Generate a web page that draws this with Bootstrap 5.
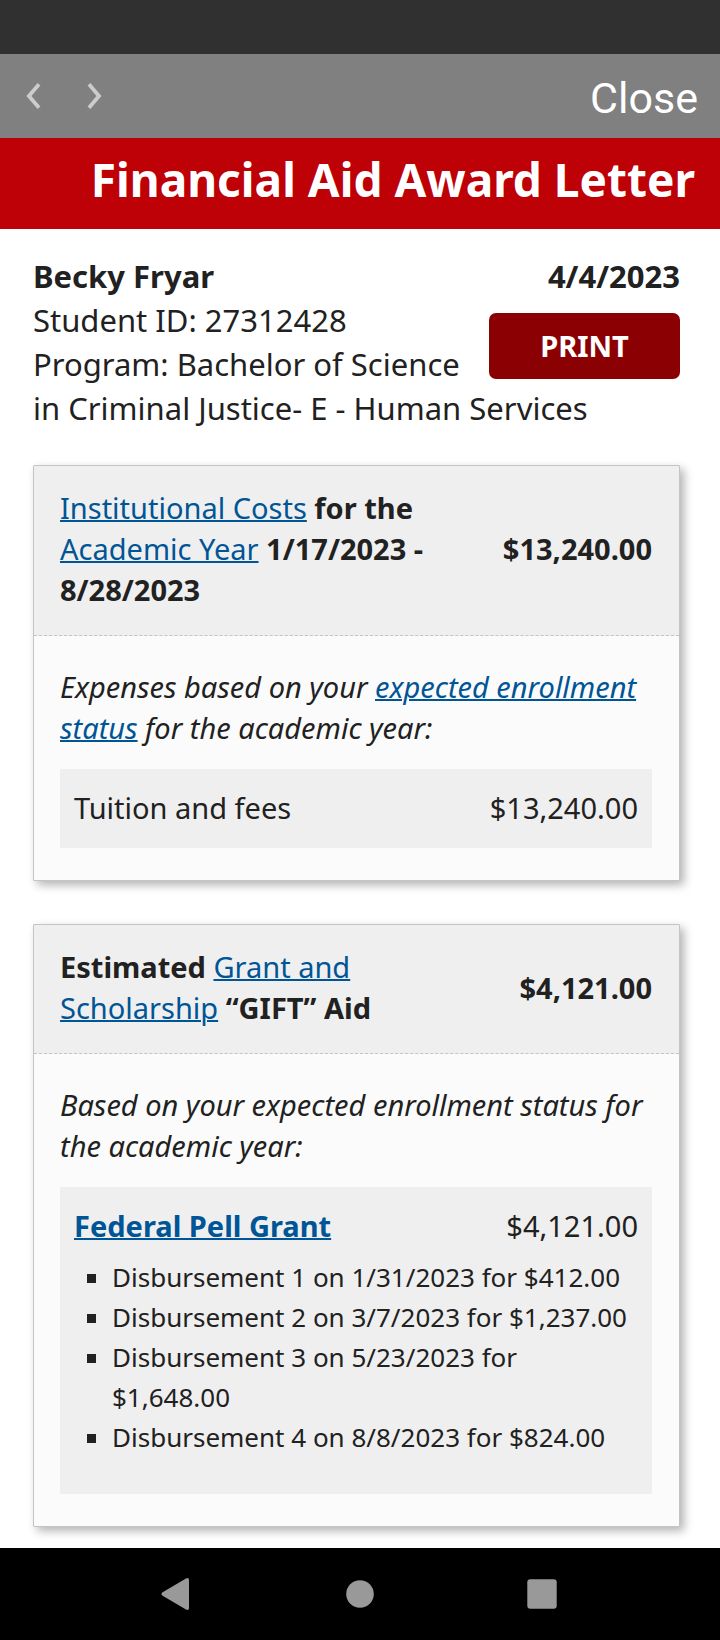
<!DOCTYPE html>
<html lang="en">
<head>
<meta charset="utf-8">
<meta name="viewport" content="width=device-width, initial-scale=1">
<title>Financial Aid Award Letter</title>
<link href="https://cdn.jsdelivr.net/npm/bootstrap@5.3.0/dist/css/bootstrap.min.css" rel="stylesheet">
<style>
  body { font-family: "Noto Sans", sans-serif; font-size: 29px; line-height: 41px; color: #212121; background: #fff; }
  a { color: #005596; text-decoration-thickness: 2px; }
  .status-strip { height: 54px; background: #303030; }
  .browser-bar { height: 84px; padding: 0 22px 0 18px; background: #808080; }
  .browser-bar .btn { --bs-btn-padding-x: 0; --bs-btn-padding-y: 0; border: 0; border-radius: 0; }
  .history-btn { width: 30px; line-height: 0; }
  .browser-bar .close-btn { padding-top: 3px; font: 43px/50px Roboto, sans-serif; color: #fff; }
  .letter-title { padding: 10px 25px 19px; font-size: 46px; line-height: 62px; background: #be0007; }
  .letter-body { padding: 25px 40px 21px 33px; }
  .student { font-size: 31px; line-height: 44px; margin-bottom: 35px; }
  .letter-side { margin-left: 26px; }
  .print-btn { --bs-btn-bg: #8b0003; --bs-btn-color: #fff; --bs-btn-hover-bg: #720002; --bs-btn-hover-color: #fff;
    width: 191px; height: 66px; margin-top: 15px; padding: 0 0 2px; border: 0; border-radius: 7px; font-size: 29px; line-height: 41px; }
  .award { border: 1px solid #c4c4c4; border-radius: 1px; background: #fbfbfb; box-shadow: 4px 4px 10px rgba(0,0,0,.3); }
  .award + .award { margin-top: 43px; }
  .award-head { padding: 21px 27px 25px 26px; border-bottom: 1px dashed #c4c4c4; background: #efefef; }
  .award-detail { padding: 30px 27px 32px 26px; }
  .award-detail > p { margin-bottom: 21px; }
  .award-item { padding: 18px 14px 20px; background: #efefef; }
  .disbursements { list-style: square; font-size: 26px; line-height: 40px; margin: 11px 0 17px; padding-left: 38px; }
  .system-nav { height: 92px; background: #000; }
  .system-nav .btn { width: 182px; padding: 0; border: 0; line-height: 0; }
</style>
</head>
<body>
<div class="status-strip"></div>
<nav class="browser-bar d-flex align-items-center" aria-label="Browser">
  <button type="button" class="btn history-btn" aria-label="Back">
    <svg width="30" height="30" viewBox="0 0 30 30" fill="none" stroke="#ccc" stroke-width="3.8"><path d="M21 3.200 10.900 15 21 26.800"/></svg>
  </button>
  <button type="button" class="btn history-btn ms-4" aria-label="Forward">
    <svg width="30" height="30" viewBox="0 0 30 30" fill="none" stroke="#ccc" stroke-width="3.8"><path d="M17 3.200 27 15 17 26.800"/></svg>
  </button>
  <button type="button" class="btn close-btn ms-auto">Close</button>
</nav>
<header>
  <h1 class="letter-title text-white text-end fw-bold mb-0">Financial Aid Award Letter</h1>
</header>
<main class="letter-body">
  <section class="student">
    <div class="letter-side float-end text-end">
      <div class="fw-bold">4/4/2023</div>
      <button type="button" class="btn print-btn fw-bold d-block">PRINT</button>
    </div>
    <div class="fw-bold">Becky Fryar</div>
    <div>Student ID: 27312428</div>
    <div>Program: Bachelor of Science in Criminal Justice- E - Human Services</div>
  </section>

  <section class="award">
    <div class="award-head d-flex align-items-center fw-bold">
      <div class="col-8"><a href="#costs" class="fw-normal">Institutional Costs</a> for the <a href="#year" class="fw-normal">Academic Year</a> 1/17/2023 - 8/28/2023</div>
      <div class="col-4 text-end">$13,240.00</div>
    </div>
    <div class="award-detail">
      <p class="fst-italic">Expenses based on your <a href="#enrollment">expected enrollment status</a> for the academic year:</p>
      <div class="award-item d-flex justify-content-between">
        <span>Tuition and fees</span><span>$13,240.00</span>
      </div>
    </div>
  </section>

  <section class="award">
    <div class="award-head d-flex align-items-center fw-bold">
      <div class="col-8">Estimated <a href="#grants" class="fw-normal">Grant and Scholarship</a> “GIFT” Aid</div>
      <div class="col-4 text-end">$4,121.00</div>
    </div>
    <div class="award-detail">
      <p class="fst-italic">Based on your expected enrollment status for the academic year:</p>
      <div class="award-item">
        <div class="d-flex justify-content-between">
          <a href="#pell" class="fw-bold">Federal Pell Grant</a><span>$4,121.00</span>
        </div>
        <ul class="disbursements">
          <li>Disbursement 1 on 1/31/2023 for $412.00</li>
          <li>Disbursement 2 on 3/7/2023 for $1,237.00</li>
          <li>Disbursement 3 on 5/23/2023 for $1,648.00</li>
          <li>Disbursement 4 on 8/8/2023 for $824.00</li>
        </ul>
      </div>
    </div>
  </section>
</main>
<nav class="system-nav d-flex justify-content-center align-items-center" aria-label="System">
  <button type="button" class="btn" aria-label="Back">
    <svg width="36" height="36" viewBox="0 0 36 36" fill="#999"><path d="M2.200 16.600 26 2.400Q29 1.200 29 4v28q0 2.800-3 1.600L2.200 19.400Q.4 18 2.200 16.600Z"/></svg>
  </button>
  <button type="button" class="btn" aria-label="Home">
    <svg width="36" height="36" viewBox="0 0 36 36" fill="#999"><circle cx="18" cy="18" r="13.800"/></svg>
  </button>
  <button type="button" class="btn" aria-label="Recent apps">
    <svg width="36" height="36" viewBox="0 0 36 36" fill="#999"><rect x="3.300" y="3.200" width="29.400" height="29.600" rx="3"/></svg>
  </button>
</nav>
<script src="https://cdn.jsdelivr.net/npm/bootstrap@5.3.0/dist/js/bootstrap.bundle.min.js"></script>
</body>
</html>
